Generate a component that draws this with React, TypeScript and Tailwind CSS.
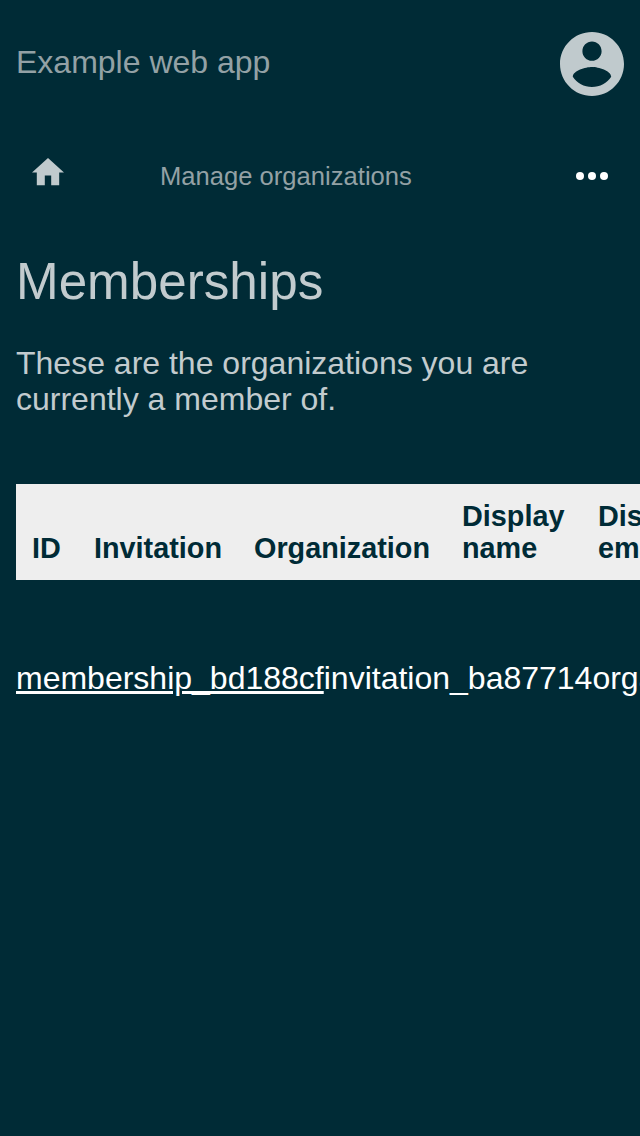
const headings = [
  { label: "ID", style: "w-[62px]" },
  { label: "Invitation", style: "w-[160px]" },
  { label: "Organization", style: "w-[208px]" },
  { label: "Display name", style: "w-[136px]" },
  { label: "Display email", style: "w-[136px]" },
];

export default function App() {
  return (
    <div className="flex h-[1136px] w-[640px] flex-col overflow-hidden bg-[#002b36] font-['Liberation_Sans',sans-serif] text-[#c2cbce]">
      <header className="flex h-32 items-center justify-between px-4">
        <div className="pb-1 text-[32px] leading-9 text-[#93a1a5]">Example web app</div>
        <svg viewBox="2 2 20 20" className="size-16" fill="#c0cacd" aria-label="Account">
          <path d="M12 2C6.48 2 2 6.48 2 12s4.48 10 10 10 10-4.48 10-10S17.520 2 12 2zm0 3c1.660 0 3 1.340 3 3s-1.340 3-3 3-3-1.340-3-3 1.340-3 3-3zm0 14.200c-2.500 0-4.710-1.280-6-3.220.030-1.990 4-3.080 6-3.080 1.990 0 5.970 1.090 6 3.080-1.290 1.940-3.500 3.220-6 3.220z" />
        </svg>
      </header>
      <nav className="flex h-24 items-center px-8">
        <svg viewBox="2 3 20 17" className="mb-2 h-[27.200px] w-8" fill="#c0cacd" aria-label="Home">
          <path d="M10 20v-6h4v6h5v-8h3L12 3 2 12h3v8z" />
        </svg>
        <div className="ml-24 grow text-[25.600px] leading-8 text-[#93a1a5]">Manage organizations</div>
        <svg viewBox="0 0 32 8" className="h-2 w-8" fill="#ffffff" aria-label="More">
          <circle cx="4" cy="4" r="4" />
          <circle cx="16" cy="4" r="4" />
          <circle cx="28" cy="4" r="4" />
        </svg>
      </nav>
      <main className="px-4 pt-7">
        <h1 className="text-[51.200px] leading-[60px]">Memberships</h1>
        <p className="mt-[33px] w-[608px] text-[32px] leading-9">
          These are the organizations you are currently a member of.
        </p>
        <div className="mt-[67px] flex h-24 w-[760px] items-end bg-[#eeeeee] pb-4 pl-4">
          {headings.map((heading) => (
            <div key={heading.label} className={`${heading.style} shrink-0 pr-8 text-[28.800px] leading-8 font-bold text-[#002b36]`}>
              {heading.label}
            </div>
          ))}
        </div>
        <div className="mt-20 flex text-[32px] leading-9 whitespace-nowrap text-white">
          <a className="underline">membership_bd188cf</a>
          <span>invitation_ba87714</span>
          <span>organization_7f3c21a</span>
        </div>
      </main>
    </div>
  );
}
